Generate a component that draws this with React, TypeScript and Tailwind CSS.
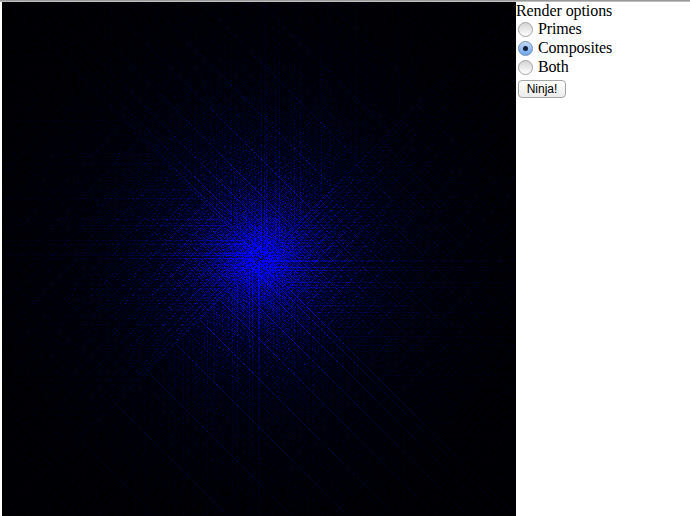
import { useEffect, useRef } from 'react'

const SIZE = 514

// Ulam spiral, each composite gets a blue that fades with distance from the centre
function drawSpiral(canvas: HTMLCanvasElement) {
  const ctx = canvas.getContext('2d')
  if (!ctx) return
  const total = SIZE * SIZE
  const divisors = new Uint16Array(total + 2)
  for (let i = 2; i <= total; i++) {
    for (let j = i * 2; j <= total; j += i) divisors[j]++
  }
  const img = ctx.createImageData(SIZE, SIZE)
  for (let i = 3; i < img.data.length; i += 4) img.data[i] = 255

  const cx = 258
  const cy = 257
  let x = cx
  let y = cy
  let dx = 1
  let dy = 0
  let run = 1
  let n = 1
  while (n <= total) {
    for (let turn = 0; turn < 2; turn++) {
      for (let s = 0; s < run; s++) {
        if (x >= 0 && y >= 0 && x < SIZE && y < SIZE && divisors[n] > 0) {
          const r = Math.hypot(x - cx, y - cy) + 6
          const blue = (divisors[n] * 40000) / Math.pow(r, 2)
          img.data[(y * SIZE + x) * 4 + 2] = Math.min(255, blue)
        }
        x += dx
        y += dy
        n++
      }
      const t = dx
      dx = dy
      dy = -t
    }
    run++
  }
  ctx.putImageData(img, 0, 0)
}

function Option({ label, checked }: { label: string; checked?: boolean }) {
  return (
    <label className="flex items-center h-[19px]">
      <span
        className={`ml-[2px] w-[15px] h-[15px] rounded-full border flex items-center justify-center ${
          checked
            ? 'bg-gradient-to-b from-[#c2d8f5] to-[#6ea4ea] border-[#6f8fb8]'
            : 'bg-gradient-to-b from-[#d4d4d4] to-[#ffffff] border-[#a4a4a4]'
        }`}
      >
        {checked && <span className="w-[5px] h-[5px] rounded-full bg-[#10203a]" />}
      </span>
      <span className="ml-[5px] pb-[2px] tracking-[-0.15px]">{label}</span>
    </label>
  )
}

export default function App() {
  const ref = useRef<HTMLCanvasElement>(null)

  useEffect(() => {
    if (ref.current) drawSpiral(ref.current)
  }, [])

  return (
    <div className="w-[690px] h-[516px] overflow-hidden bg-white text-black text-[16px] leading-[18px] font-['Liberation_Serif',serif]">
      <div className="h-[2px] bg-gradient-to-b from-[#8a8a8a] to-[#d0d0d0]" />
      <div className="flex">
        <canvas ref={ref} width={SIZE} height={SIZE} className="block ml-[2px] w-[514px] h-[514px]" />
        <div className="flex flex-col">
          <div className="h-[18px] tracking-[-0.08px]">Render options</div>
          <Option label="Primes" />
          <Option label="Composites" checked />
          <Option label="Both" />
          <button className="mt-[3px] ml-[2px] w-[48px] h-[18px] rounded-[4px] border border-[#a6a6a6] bg-gradient-to-b from-white to-[#ececec] text-[12px] leading-none font-['Liberation_Sans',sans-serif]">
            Ninja!
          </button>
        </div>
      </div>
    </div>
  )
}
